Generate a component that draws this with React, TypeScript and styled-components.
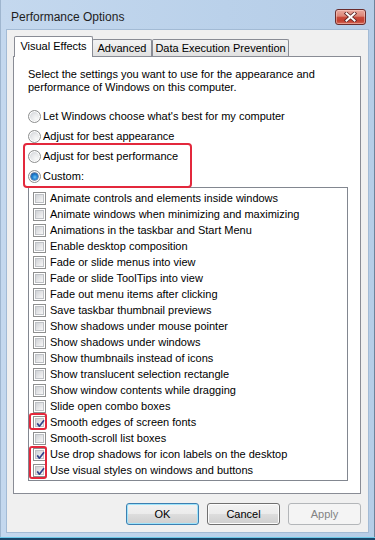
import React from 'react'
import styled, { createGlobalStyle } from 'styled-components'

const GlobalStyle = createGlobalStyle`
  html, body {
    margin: 0;
    padding: 0;
    background: #ffffff;
  }
  body {
    font-family: "Liberation Sans", Arial, sans-serif;
    font-size: 11px;
    color: #000;
  }
`

const RED = '#e3283c'

const Window = styled.div`
  width: 375px;
  height: 540px;
  display: flex;
  flex-direction: column;
  background: linear-gradient(90deg, #c4d8ee 0%, #bad1ea 60%, #b6cde7 100%);
  box-shadow: inset 1px 0 #9fb6cf, inset -1px 0 #6e8299;
  overflow: hidden;
`

const TitleBar = styled.div`
  height: 30px;
  flex: none;
  box-sizing: border-box;
  padding: 4px 9px 0 11px;
  display: flex;
  align-items: center;
  justify-content: space-between;
`

const Title = styled.span`
  font-size: 12px;
  line-height: 14px;
  color: #1e1e1e;
`

const CloseButton = styled.div`
  width: 31px;
  height: 16px;
  box-sizing: border-box;
  border: 1px solid #6a2d2d;
  border-radius: 3px;
  background: linear-gradient(180deg, #eaaaa0 0%, #dc8577 45%, #c94b3c 50%, #c24030 78%, #d56c5b 100%);
  box-shadow: inset 0 0 0 1px rgba(255, 220, 210, 0.45);
  display: flex;
  align-items: center;
  justify-content: center;
`

const Client = styled.div`
  height: 502px;
  flex: none;
  box-sizing: border-box;
  margin: 0 7px;
  padding: 6px 7px 7px 6px;
  background: #f0f0f0;
  box-shadow: 0 0 0 1px #a3bbd5;
  display: flex;
  flex-direction: column;
`

const BottomEdge = styled.div`
  flex: 1;
  background: linear-gradient(180deg, transparent 0 5px, #6cc9e8 5px 6px, #1b4569 6px);
`

const Tabs = styled.div`
  height: 20px;
  padding-left: 1px;
  display: flex;
  align-items: flex-end;
  position: relative;
  z-index: 1;
`

const Tab = styled.div<{ $active?: boolean; $width: number }>`
  width: ${(p) => p.$width}px;
  height: ${(p) => (p.$active ? 21 : 17)}px;
  margin-bottom: ${(p) => (p.$active ? -1 : 0)}px;
  margin-right: ${(p) => (p.$active ? -1 : 0)}px;
  box-sizing: border-box;
  border: 1px solid #898c95;
  border-bottom: none;
  border-radius: 2px 2px 0 0;
  padding-bottom: ${(p) => (p.$active ? 2 : 0)}px;
  background: ${(p) => (p.$active ? '#ffffff' : 'linear-gradient(180deg, #f3f3f3 0%, #ebebeb 50%, #e0e0e0 100%)')};
  position: relative;
  z-index: ${(p) => (p.$active ? 2 : 1)};
  display: flex;
  align-items: center;
  justify-content: center;
  line-height: 13px;
  white-space: nowrap;
`

const Panel = styled.div`
  border: 1px solid #898c95;
  background: #ffffff;
  padding: 11px 12px 12px 14px;
`

const Intro = styled.p`
  margin: 0;
  line-height: 13px;
`

const RadioGroup = styled.div`
  margin-top: 12px;
`

const RadioRow = styled.div`
  height: 20px;
  display: flex;
  align-items: center;
  gap: 2px;
  line-height: 13px;
`

const Radio = styled.span<{ $checked?: boolean }>`
  width: 13px;
  height: 13px;
  box-sizing: border-box;
  border-radius: 50%;
  border: 1px solid #8e8f8f;
  background: radial-gradient(circle at 65% 70%, #f8f8f8 0%, #e6e7e9 45%, #c6cacf 100%);
  box-shadow: inset 0 0 0 1px #ffffff;
  display: flex;
  align-items: center;
  justify-content: center;
  flex: none;

  &::after {
    content: '';
    display: ${(p) => (p.$checked ? 'block' : 'none')};
    width: 7px;
    height: 7px;
    border-radius: 50%;
    background: radial-gradient(circle at 55% 60%, #6fc4f4 0%, #1f7fd0 45%, #0b3f8c 100%);
    box-shadow: 0 0 0 0.5px #163c74;
  }
`

const Marked = styled.div<{ $left: number; $top: number; $bottom: number; $width: number; $radius: number }>`
  position: relative;

  &::after {
    content: '';
    position: absolute;
    left: ${(p) => p.$left}px;
    top: ${(p) => p.$top}px;
    bottom: ${(p) => p.$bottom}px;
    width: ${(p) => p.$width}px;
    box-sizing: border-box;
    border: 2px solid ${RED};
    border-radius: ${(p) => p.$radius}px;
    pointer-events: none;
  }
`

const ListBox = styled.div`
  margin-top: 1px;
  border: 1px solid #828790;
  padding: 2px 4px;
  background: #ffffff;
`

const Item = styled.div`
  height: 16px;
  display: flex;
  align-items: center;
  gap: 4px;
  line-height: 13px;
  white-space: nowrap;
`

const Box = styled.span`
  width: 13px;
  height: 13px;
  box-sizing: border-box;
  border: 1px solid #8e8f8f;
  background: #ffffff;
  padding: 1px;
  flex: none;
  position: relative;

  &::before {
    content: '';
    display: block;
    width: 100%;
    height: 100%;
    box-sizing: border-box;
    border: 1px solid #bfc2c6;
    background: linear-gradient(135deg, #cfd2d6 0%, #e4e5e7 50%, #f7f7f7 100%);
  }

  svg {
    position: absolute;
    left: 0;
    top: 0;
  }
`

const ButtonRow = styled.div`
  margin-top: 9px;
  display: flex;
  justify-content: flex-end;
  gap: 8px;
`

const Button = styled.div<{ $variant?: 'default' | 'disabled' }>`
  width: 73px;
  height: 22px;
  box-sizing: border-box;
  border-radius: 3px;
  border: 1px solid
    ${(p) => (p.$variant === 'default' ? '#3c7fb1' : p.$variant === 'disabled' ? '#b3b6b9' : '#707070')};
  background: ${(p) =>
    p.$variant === 'disabled'
      ? '#f4f4f4'
      : 'linear-gradient(180deg, #f2f2f2 0%, #ebebeb 50%, #dddddd 50%, #cfcfcf 100%)'};
  box-shadow: inset 0 0 0 1px
    ${(p) => (p.$variant === 'default' ? '#9fe4fb' : p.$variant === 'disabled' ? '#f4f4f4' : '#fcfcfc')};
  color: ${(p) => (p.$variant === 'disabled' ? '#838383' : '#000')};
  display: flex;
  align-items: center;
  justify-content: center;
  line-height: 13px;
`

const CloseGlyph = () => (
  <svg width="13" height="10" viewBox="0 0 13 10">
    <path d="M2.5 1.5 L10.5 8.5 M10.5 1.5 L2.5 8.5" stroke="#5a2424" strokeWidth="3.6" strokeLinecap="square" />
    <path d="M2.5 1.5 L10.5 8.5 M10.5 1.5 L2.5 8.5" stroke="#ffffff" strokeWidth="2" strokeLinecap="square" />
  </svg>
)

const CheckMark = () => (
  <svg width="13" height="13" viewBox="0 0 13 13">
    <path d="M3.2 6.4 L5.4 9.2 L10 3.2" fill="none" stroke="#34448a" strokeWidth="1.7" strokeLinejoin="round" />
  </svg>
)

const CheckBox = ({ checked }: { checked?: boolean }) => <Box>{checked && <CheckMark />}</Box>

const effects: [string, boolean][] = [
  ['Animate controls and elements inside windows', false],
  ['Animate windows when minimizing and maximizing', false],
  ['Animations in the taskbar and Start Menu', false],
  ['Enable desktop composition', false],
  ['Fade or slide menus into view', false],
  ['Fade or slide ToolTips into view', false],
  ['Fade out menu items after clicking', false],
  ['Save taskbar thumbnail previews', false],
  ['Show shadows under mouse pointer', false],
  ['Show shadows under windows', false],
  ['Show thumbnails instead of icons', false],
  ['Show translucent selection rectangle', false],
  ['Show window contents while dragging', false],
  ['Slide open combo boxes', false],
  ['Smooth edges of screen fonts', true],
  ['Smooth-scroll list boxes', false],
  ['Use drop shadows for icon labels on the desktop', true],
  ['Use visual styles on windows and buttons', true],
]

const renderItem = ([label, checked]: [string, boolean]) => (
  <Item key={label}>
    <CheckBox checked={checked} />
    {label}
  </Item>
)

export default function App() {
  return (
    <>
      <GlobalStyle />
      <Window>
        <TitleBar>
          <Title>Performance Options</Title>
          <CloseButton>
            <CloseGlyph />
          </CloseButton>
        </TitleBar>
        <Client>
          <Tabs>
            <Tab $active $width={79}>Visual Effects</Tab>
            <Tab $width={60}>Advanced</Tab>
            <Tab $width={137}>Data Execution Prevention</Tab>
          </Tabs>
          <Panel>
            <Intro>
              Select the settings you want to use for the appearance and
              <br />
              performance of Windows on this computer.
            </Intro>
            <RadioGroup>
              <RadioRow>
                <Radio />
                Let Windows choose what's best for my computer
              </RadioRow>
              <RadioRow>
                <Radio />
                Adjust for best appearance
              </RadioRow>
              <Marked $left={-5} $top={-3} $bottom={-2} $width={169} $radius={4}>
                <RadioRow>
                  <Radio />
                  Adjust for best performance
                </RadioRow>
                <RadioRow>
                  <Radio $checked />
                  Custom:
                </RadioRow>
              </Marked>
            </RadioGroup>
            <ListBox>
              {effects.slice(0, 14).map(renderItem)}
              <Marked $left={-4} $top={-1} $bottom={0} $width={18} $radius={3}>
                {effects.slice(14, 15).map(renderItem)}
              </Marked>
              {effects.slice(15, 16).map(renderItem)}
              <Marked $left={-4} $top={0} $bottom={-1} $width={18} $radius={3}>
                {effects.slice(16).map(renderItem)}
              </Marked>
            </ListBox>
          </Panel>
          <ButtonRow>
            <Button $variant="default">OK</Button>
            <Button>Cancel</Button>
            <Button $variant="disabled">Apply</Button>
          </ButtonRow>
        </Client>
        <BottomEdge />
      </Window>
    </>
  )
}
